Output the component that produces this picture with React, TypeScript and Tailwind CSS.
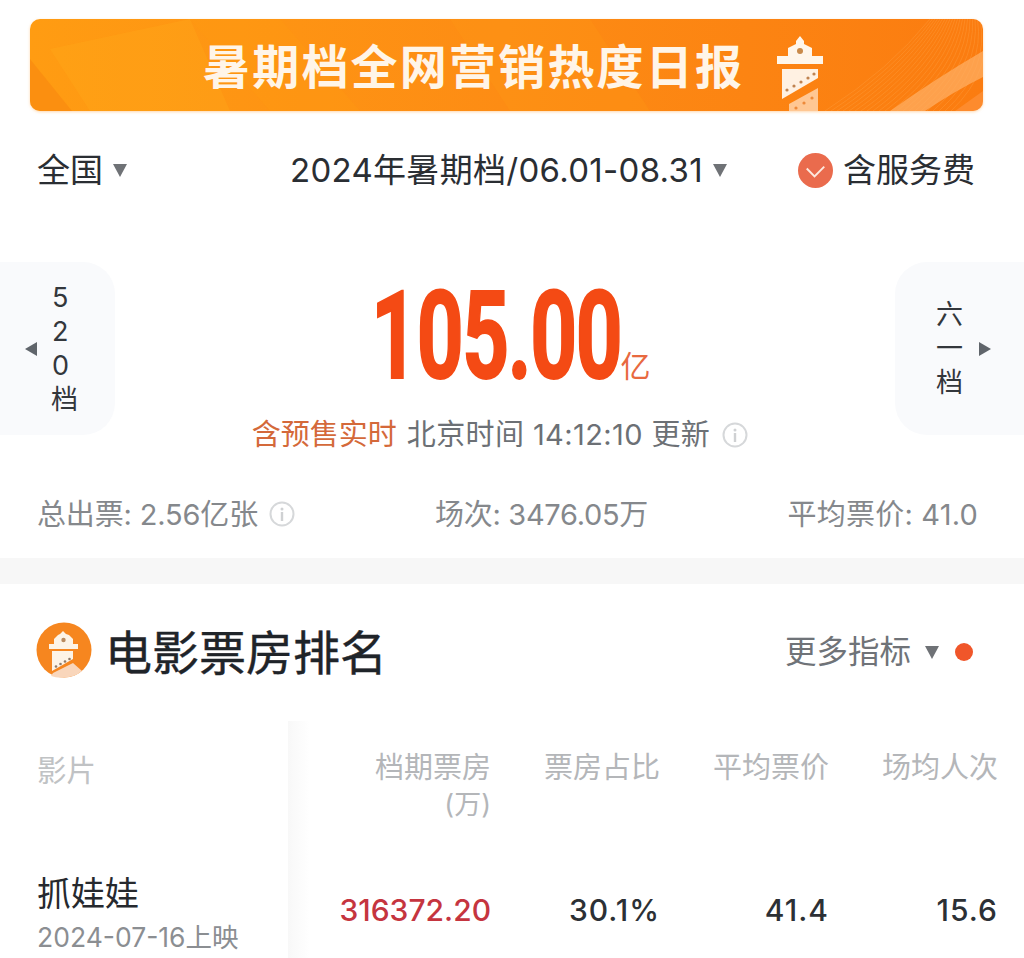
import React from "react";

const Caret = ({ className = "" }: { className?: string }) => (
  <svg width="16" height="16" viewBox="0 0 16 16" className={className}>
    <path d="M1 2 H15 L8 15 Z" fill="#6f7276" />
  </svg>
);

const Info = ({ className = "" }: { className?: string }) => (
  <svg width="26" height="26" viewBox="0 0 26 26" className={className}>
    <circle cx="13" cy="13" r="11.5" fill="none" stroke="#d6d8da" strokeWidth="2" />
    <circle cx="13" cy="8" r="1.5" fill="#cfd1d3" />
    <rect x="11.8" y="11" width="2.4" height="9" fill="#cfd1d3" />
  </svg>
);

const Tri = ({ dir }: { dir: "l" | "r" }) => (
  <svg width="14" height="16" viewBox="0 0 14 16" className="shrink-0">
    <path d={dir === "l" ? "M13 1 V15 L1 8 Z" : "M1 1 V15 L13 8 Z"} fill="#60656b" />
  </svg>
);

const BannerArt = () => (
  <svg viewBox="0 0 953 92" className="absolute inset-0 w-full h-full" preserveAspectRatio="none">
    <path d="M20 30 L160 0 L200 92 L60 92 Z" fill="#ffa91a" opacity="0.35" />
    <path d="M160 0 L250 0 L330 92 L240 92 Z" fill="#ff9a12" opacity="0.35" />
    <path d="M0 40 L42 92 L0 92 Z" fill="#f98a10" opacity="0.7" />
    <path d="M420 0 L560 0 L620 92 L480 92 Z" fill="#ff9a14" opacity="0.25" />
    {Array.from({ length: 22 }).map((_, i) => (
      <path key={i} d={`M${795 + i * 6} 92 Q${860 + i * 5} 50 ${900 + i * 2.5} 0`} fill="none" stroke="#ffa64a" strokeWidth="0.8" opacity="0.4" />
    ))}
    <path d="M860 92 Q905 60 953 32 L953 58 Q925 72 895 92 Z" fill="#ffb066" opacity="0.7" />
    <path d="M925 92 L953 72 L953 92 Z" fill="#ff9a4a" opacity="0.5" />
  </svg>
);

const BannerTower = () => (
  <svg width="46" height="76" viewBox="0 0 46 76" className="shrink-0">
    <path d="M23 0 L27 5 L27 8 L35 12 L35 20 L46 20 L46 28 L0 28 L0 20 L11 20 L11 12 L19 8 L19 5 Z" fill="#fff6ea" />
    <circle cx="23" cy="15" r="3" fill="#c98a4a" />
    <path d="M5 33 H41 V42 L5 63 Z" fill="#fff1e2" />
    <g fill="#c08350">
      <circle cx="10" cy="54" r="1.6" />
      <circle cx="17" cy="50" r="1.6" />
      <circle cx="24" cy="46" r="1.6" />
      <circle cx="31" cy="42" r="1.6" />
      <circle cx="37" cy="38" r="1.6" />
    </g>
    <path d="M12 76 V68 L41 52 V76 Z" fill="#ffc793" />
    <g fill="#ee8a3a">
      <circle cx="19" cy="72" r="1.6" />
      <circle cx="27" cy="67" r="1.6" />
      <circle cx="35" cy="62" r="1.6" />
    </g>
  </svg>
);

const Logo = () => (
  <svg width="56" height="56" viewBox="0 0 56 56" className="shrink-0 -mt-[5px]">
    <circle cx="28" cy="28" r="27.5" fill="#f6861f" />
    <path d="M27 9 L30 12 L33 13 L37 17 L37 22 L42 22 L42 27 L13 27 L13 22 L18 22 L18 17 L22 13 L24 12 Z" fill="#fdf3e6" />
    <circle cx="27.5" cy="18" r="2.2" fill="#b98a5e" />
    <path d="M16 29 H37 V37 L16 49 Z" fill="#fdf3e6" />
    <path d="M15 54 L17 51 L37 41 L46 49 A27.5 27.5 0 0 1 28 55.5 A27.5 27.5 0 0 1 15 54 Z" fill="#f9d6bb" />
    <g fill="#8e7a6a">
      <circle cx="20" cy="44.5" r="1.3" />
      <circle cx="24.5" cy="42" r="1.3" />
      <circle cx="29" cy="39.5" r="1.3" />
      <circle cx="33.5" cy="37" r="1.3" />
    </g>
  </svg>
);

const Th = ({ children }: { children: React.ReactNode }) => (
  <div className="w-[169px] text-right">{children}</div>
);

export default function App() {
  return (
    <div
      className="w-[1024px] h-[958px] overflow-hidden bg-white text-[#2a2e33]"
      style={{ fontFamily: 'Inter, "Noto Sans CJK SC", sans-serif' }}
    >
      <div className="pt-[19px] pl-[30px] pr-[41px]">
        <div className="relative h-[92px] rounded-[10px] overflow-hidden bg-gradient-to-r from-[#ff9c12] via-[#fd8c14] to-[#fb7c10] shadow-[0_1px_3px_rgba(255,190,120,0.6)]">
          <BannerArt />
          <div className="relative h-full flex items-start pl-[173px]">
            <span className="mt-[18px] text-[47px] leading-[60px] font-bold tracking-[2.2px] text-[#fff5e8] whitespace-nowrap">
              暑期档全网营销热度日报
            </span>
            <div className="ml-[33px] mt-[17px]">
              <BannerTower />
            </div>
          </div>
        </div>
      </div>

      <div className="h-[118px] flex items-center pl-[37px] pr-[49px] text-[33px] leading-none">
        <span>全国</span>
        <Caret className="ml-[9px]" />
        <span className="ml-[162px] tracking-[0.3px] whitespace-nowrap">2024年暑期档/06.01-08.31</span>
        <Caret className="ml-[9px]" />
        <svg width="35" height="35" viewBox="0 0 36 36" className="ml-auto shrink-0">
          <circle cx="18" cy="18" r="18" fill="#ea6b4d" />
          <path d="M9 16 L17 24 L27 14" fill="none" stroke="#fde9df" strokeWidth="2" />
        </svg>
        <span className="ml-[10px] whitespace-nowrap">含服务费</span>
      </div>

      <div className="mt-[33px] h-[190px] flex items-start">
        <div className="w-[115px] h-[173px] rounded-r-[32px] bg-[#f9fafc] flex items-center pl-[24px]">
          <Tri dir="l" />
          <div className="ml-[13px] flex flex-col items-start text-[27px] leading-[34px] text-[#33373c]">
            <span className="pl-[1px]">5</span>
            <span className="pl-[1px]">2</span>
            <span className="pl-[1px]">0</span>
            <span>档</span>
          </div>
        </div>
        <div className="flex-1 flex flex-col items-center">
          <div className="h-[140px] flex items-end pl-[15px] pb-[6px] text-[#f44a14]">
            <span className="inline-block w-[244px] text-[123px] leading-[120px] font-bold whitespace-nowrap text-center">
              <span className="inline-block scale-x-[0.665] tracking-[-2px] [-webkit-text-stroke:2px_#f44a14]" style={{ fontFamily: "Roboto, sans-serif", marginLeft: -70, marginRight: -70 }}>
                105.00
              </span>
            </span>
            <span className="text-[30px] leading-[30px] ml-[2px] mb-[15px] text-[#e8693f]">亿</span>
          </div>
          <div className="mt-[18px] mr-[10px] flex items-center text-[29px] leading-none whitespace-nowrap">
            <span className="text-[#d4693a]">含预售实时</span>
            <span className="ml-[10px] text-[#6c7075] tracking-[0.4px]">北京时间 14:12:10 更新</span>
            <Info className="ml-[12px]" />
          </div>
        </div>
        <div className="w-[129px] h-[173px] rounded-l-[32px] bg-[#f9fafc] flex items-center pl-[41px]">
          <div className="flex flex-col items-center text-[27px] leading-[34px] text-[#33373c]">
            <span>六</span>
            <span>一</span>
            <span>档</span>
          </div>
          <div className="ml-[15px]">
            <Tri dir="r" />
          </div>
        </div>
      </div>

      <div className="mt-[40px] h-[44px] pl-[37px] pr-[46px] flex items-center text-[#85888c] text-[29px] leading-none whitespace-nowrap">
        <span className="tracking-[-0.16px]">总出票: 2.56亿张</span>
        <Info className="ml-[11px]" />
        <span className="ml-[140px] tracking-[-0.3px]">场次: 3476.05万</span>
        <span className="ml-auto tracking-[0.2px]">平均票价: 41.0</span>
      </div>

      <div className="mt-[22px] h-[26px] bg-[#f7f7f7]" />

      <div className="mt-[40px] h-[56px] pl-[36px] pr-[51px] flex items-center">
        <Logo />
        <span className="ml-[13px] text-[47px] leading-none text-[#1f2429] [-webkit-text-stroke:0.4px_#1f2429]">电影票房排名</span>
        <span className="ml-auto text-[31.5px] leading-none text-[#6f7378]">更多指标</span>
        <Caret className="ml-[13px]" />
        <span className="ml-[15px] w-[18px] h-[18px] rounded-full bg-[#f0562a]" />
      </div>

      <div className="mt-[41px] flex">
        <div className="w-[288px] shrink-0 pl-[37px]">
          <div className="h-[153px] pt-[29px] text-[29.5px] leading-[40px] text-[#c0c2c4]">影片</div>
          <div className="text-[34px] leading-[40px] text-[#26292e]">抓娃娃</div>
          <div className="mt-[3px] text-[26.5px] leading-[40px] text-[#8b8e92] whitespace-nowrap">2024-07-16上映</div>
        </div>
        <div className="w-[22px] shrink-0 h-[260px] bg-gradient-to-r from-[#f8f8f8] to-white" />
        <div className="flex-1 flex flex-col pl-[12px] -ml-[12px]">
          <div className="h-[142px] pt-[29px] flex justify-end pr-[27px] text-[29px] leading-[36px] text-[#b4b6b9]">
            <div className="w-[181px] text-right shrink-0">档期票房<br /><span className="text-[27px] text-[#b4b6b9]">(万)</span></div>
            <Th>票房占比</Th>
            <Th>平均票价</Th>
            <Th>场均人次</Th>
          </div>
          <div className="h-[44px] mt-[25px] flex items-center justify-end pr-[27px] text-[30px] leading-none font-medium text-[#2c3035]">
            <div className="w-[181px] text-right shrink-0 text-[#c5353f]">316372.20</div>
            <div className="w-[169px] text-right tracking-[1px]">30.1%</div>
            <div className="w-[169px] text-right tracking-[1px]">41.4</div>
            <div className="w-[169px] text-right tracking-[1px]">15.6</div>
          </div>
        </div>
      </div>
    </div>
  );
}
